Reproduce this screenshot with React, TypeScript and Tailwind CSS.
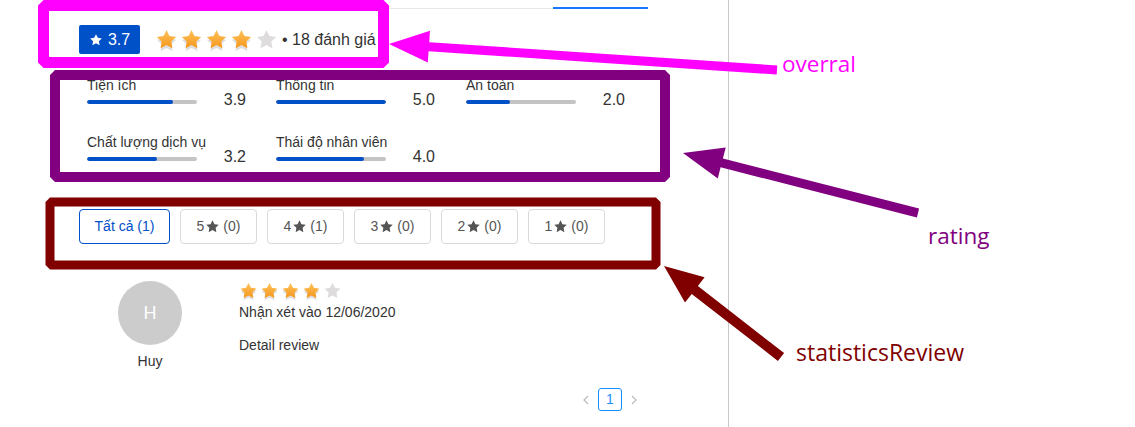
import React from 'react'

const STAR = 'M12 2l3.09 6.26L22 9.27l-5 4.87 1.18 6.88L12 17.77l-6.18 3.25L7 14.14 2 9.27l6.91-1.01L12 2z'

const criteria = [
	{ label: 'Tiện ích', value: 3.9 },
	{ label: 'Thông tin', value: 5.0 },
	{ label: 'An toàn', value: 2.0 },
	{ label: 'Chất lượng dịch vụ', value: 3.2 },
	{ label: 'Thái độ nhân viên', value: 4.0 }
]

const filters = [
	{ label: 'Tất cả', count: 1, stars: 0 },
	{ label: '5', count: 0, stars: 5 },
	{ label: '4', count: 1, stars: 4 },
	{ label: '3', count: 0, stars: 3 },
	{ label: '2', count: 0, stars: 2 },
	{ label: '1', count: 0, stars: 1 }
]

function RateStar({ size, on, id }: { size: number; on: boolean; id: string }) {
	return (
		<svg width={size} height={size + 3} viewBox="0 0 24 27" className="block">
			<defs>
				<linearGradient id={id} x1="0" y1="0" x2="0" y2="1">
					<stop offset="0" stopColor="#ffc35a" />
					<stop offset="1" stopColor="#f5961c" />
				</linearGradient>
			</defs>
			{on && <path d={STAR} transform="translate(0 3)" fill="#d6d6d6" opacity="0.8" />}
			<path d={STAR} fill={on ? `url(#${id})` : '#dedcdc'} />
		</svg>
	)
}

function Stars({ value, size, gap, prefix }: { value: number; size: number; gap: string; prefix: string }) {
	return (
		<div className={`flex ${gap}`}>
			{[1, 2, 3, 4, 5].map(i => (
				<RateStar key={i} size={size} on={i <= value} id={`${prefix}-${i}`} />
			))}
		</div>
	)
}

function SolidStar({ className }: { className: string }) {
	return (
		<svg viewBox="0 0 24 24" className={className}>
			<path d={STAR} fill="currentColor" />
		</svg>
	)
}

// arrow polygon from tail to tip
function arrow(tx: number, ty: number, hx: number, hy: number, shaft: number, headLen: number, headW: number) {
	const dx = hx - tx
	const dy = hy - ty
	const len = Math.hypot(dx, dy)
	const ux = dx / len
	const uy = dy / len
	const nx = -uy
	const ny = ux
	const bx = hx - ux * headLen
	const by = hy - uy * headLen
	const pts = [
		[tx + nx * shaft / 2, ty + ny * shaft / 2],
		[bx + nx * shaft / 2, by + ny * shaft / 2],
		[bx + nx * headW / 2, by + ny * headW / 2],
		[hx, hy],
		[bx - nx * headW / 2, by - ny * headW / 2],
		[bx - nx * shaft / 2, by - ny * shaft / 2],
		[tx - nx * shaft / 2, ty - ny * shaft / 2]
	]
	return pts.map(p => p.map(v => v.toFixed(1)).join(',')).join(' ')
}

function Annotations() {
	return (
		<>
			<svg className="pointer-events-none absolute inset-0" width="1135" height="427">
				<rect x="43.5" y="5.5" width="340" height="57" fill="none" stroke="#ff00ff" strokeWidth="11" strokeLinejoin="bevel" />
				<polygon points={arrow(777, 70, 389, 44, 9, 40, 32)} fill="#ff00ff" />

				<rect x="55" y="75" width="610" height="102" fill="none" stroke="#800080" strokeWidth="10" strokeLinejoin="bevel" />
				<polygon points={arrow(918, 213, 683, 153, 9, 40, 32)} fill="#800080" />

				<rect x="50" y="202" width="606" height="63" fill="none" stroke="#800000" strokeWidth="9" strokeLinejoin="bevel" />
				<polygon points={arrow(781, 357, 664, 266, 10, 39, 32)} fill="#800000" />
			</svg>
			<span className="absolute left-[782px] top-[49px] text-[22.5px] leading-[30px] text-[#ff00ff] font-['Open_Sans',sans-serif]">overral</span>
			<span className="absolute left-[928px] top-[221px] text-[22.5px] leading-[30px] text-[#800080] font-['Open_Sans',sans-serif]">rating</span>
			<span className="absolute left-[796px] top-[337px] text-[23px] leading-[30px] text-[#800000] font-['Open_Sans',sans-serif]">statisticsReview</span>
		</>
	)
}

export default function App() {
	return (
		<div className="relative h-[427px] w-[1135px] overflow-hidden bg-white font-['Liberation_Sans',Arial,sans-serif] text-[#333]">
			<div className="h-full w-[729px] border-r border-[#c8c8c8]">
				{/* tabs strip */}
				<div className="ml-[40px] flex h-[9px] w-[608px] items-end justify-end border-b border-[#e8e8e8]">
					<div className="mb-[-1px] h-[2px] w-[95px] bg-[#1677ff]" />
				</div>

				{/* overall score */}
				<div className="mt-[16px] flex h-[29px] items-center pl-[79px]">
					<div className="flex h-[29px] w-[61px] items-center justify-center gap-[5px] rounded-[2px] bg-[#0050c8] text-[16px] text-white">
						<SolidStar className="h-[14px] w-[14px]" />
						<span>3.7</span>
					</div>
					<div className="ml-[15px] mt-[3px]">
						<Stars value={4} size={23} gap="gap-[2px]" prefix="ov" />
					</div>
					<span className="ml-[4px] text-[16px]">• 18 đánh giá</span>
				</div>

				{/* criteria ratings */}
				<div className="mt-[23px] grid w-[600px] grid-cols-[189px_190px_190px] gap-y-[23px] pl-[87px]">
					{criteria.map(c => (
						<div key={c.label} className="w-[159px]">
							<div className="text-[14px] leading-[16px]">{c.label}</div>
							<div className="flex h-[18px] items-center justify-between">
								<div className="h-[4px] w-[110px] overflow-hidden rounded-full bg-[#c4c4c4]">
									<div className="h-full rounded-full bg-[#0050c8]" style={{ width: `${(c.value / 5) * 100}%` }} />
								</div>
								<span className="mt-[-4px] text-[16px] leading-[20px]">{c.value.toFixed(1)}</span>
							</div>
						</div>
					))}
				</div>

				{/* filter by stars */}
				<div className="mt-[41px] flex gap-[10px] pl-[79px]">
					{filters.map((f, i) => (
						<button
							key={f.label}
							className={`flex h-[35px] items-center justify-center rounded-[4px] border text-[14px] ${
								i === 0 ? 'w-[91px] border-[#0050c8] text-[#0050c8]' : 'w-[77px] border-[#d9d9d9] text-[#555]'
							}`}
						>
							{f.stars ? (
								<>
									{f.label}
									<SolidStar className="mx-[1px] h-[15px] w-[15px] text-[#555]" />
									<span className="ml-[2px]">({f.count})</span>
								</>
							) : (
								`${f.label} (${f.count})`
							)}
						</button>
					))}
				</div>

				{/* single review */}
				<div className="mt-[37px] flex">
					<div className="ml-[118px] flex w-[64px] flex-col items-center">
						<div className="flex h-[64px] w-[64px] items-center justify-center rounded-full bg-[#cccccc] text-[18px] text-white">H</div>
						<div className="mt-[8px] text-[14px] leading-[16px]">Huy</div>
					</div>
					<div className="ml-[57px]">
						<Stars value={4} size={19} gap="gap-[2px]" prefix="rv" />
						<div className="mt-[1px] text-[14px] leading-[16px]">Nhận xét vào 12/06/2020</div>
						<div className="mt-[17px] text-[14px] leading-[16px]">Detail review</div>
					</div>
				</div>

				{/* pagination */}
				<div className="mt-[19px] flex items-center justify-end gap-[6px] pr-[88px] text-[#bbb]">
					<svg width="12" height="12" viewBox="0 0 12 12">
						<path d="M8 2 L4 6 L8 10" fill="none" stroke="currentColor" strokeWidth="1.2" />
					</svg>
					<div className="flex h-[23px] w-[24px] items-center justify-center rounded-[3px] border border-[#1890ff] text-[14px] text-[#1890ff]">1</div>
					<svg width="12" height="12" viewBox="0 0 12 12">
						<path d="M4 2 L8 6 L4 10" fill="none" stroke="currentColor" strokeWidth="1.2" />
					</svg>
				</div>
			</div>

			<Annotations />
		</div>
	)
}
